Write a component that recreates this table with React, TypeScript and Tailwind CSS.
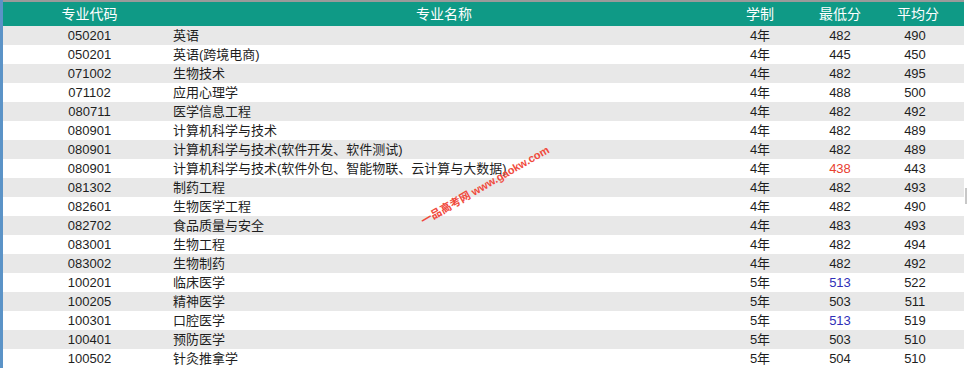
const rows: [string, string, string, string, string, string?][] = [
  ['050201', '英语', '4年', '482', '490'],
  ['050201', '英语(跨境电商)', '4年', '445', '450'],
  ['071002', '生物技术', '4年', '482', '495'],
  ['071102', '应用心理学', '4年', '488', '500'],
  ['080711', '医学信息工程', '4年', '482', '492'],
  ['080901', '计算机科学与技术', '4年', '482', '489'],
  ['080901', '计算机科学与技术(软件开发、软件测试)', '4年', '482', '489'],
  ['080901', '计算机科学与技术(软件外包、智能物联、云计算与大数据)', '4年', '438', '443', 'red'],
  ['081302', '制药工程', '4年', '482', '493'],
  ['082601', '生物医学工程', '4年', '482', '490'],
  ['082702', '食品质量与安全', '4年', '483', '493'],
  ['083001', '生物工程', '4年', '482', '494'],
  ['083002', '生物制药', '4年', '482', '492'],
  ['100201', '临床医学', '5年', '513', '522', 'blue'],
  ['100205', '精神医学', '5年', '503', '511'],
  ['100301', '口腔医学', '5年', '513', '519', 'blue'],
  ['100401', '预防医学', '5年', '503', '510'],
  ['100502', '针灸推拿学', '5年', '504', '510'],
];

const grid = 'grid grid-cols-[167px_548px_84px_76px_86px]';

export default function App() {
  return (
    <div
      className="relative w-[969px] h-[368px] overflow-hidden bg-white text-[13px] text-[#1e1e1e]"
      style={{ fontFamily: '"Liberation Sans", "Noto Sans CJK SC", sans-serif' }}
    >
      <div className="flex h-full">
        <div className="w-[3px] shrink-0 bg-[#5b93c7]" />
        <div className="w-[961px] shrink-0">
          <div className="h-[2px] bg-[#9a9a9a]" />
          <div className={`${grid} h-[24px] items-center bg-[#0f9a86] text-white text-[14px]`}>
            <div className="pl-[6px] text-center">专业代码</div>
            <div className="text-center">专业名称</div>
            <div className="text-center">学制</div>
            <div className="text-center">最低分</div>
            <div className="text-center pr-[6px]">平均分</div>
          </div>
          {rows.map((r, i) => (
            <div
              key={i}
              className={`${grid} h-[19px] items-center leading-[19px] ${i % 2 === 0 ? 'bg-[#e8e8e8]' : 'bg-white'}`}
            >
              <div className="pl-[6px] text-center">{r[0]}</div>
              <div className="pl-[3px] whitespace-nowrap">{r[1]}</div>
              <div className="text-center">{r[2]}</div>
              <div
                className={`text-center ${r[5] === 'red' ? 'text-[#e8402f]' : r[5] === 'blue' ? 'text-[#2f2fb8]' : ''}`}
              >
                {r[3]}
              </div>
              <div className="text-center pr-[12px]">{r[4]}</div>
            </div>
          ))}
        </div>
        <div className="flex-1 relative">
          <div className="absolute left-[1px] top-[188px] w-[2px] h-[16px] bg-[#c8c8c8]" />
        </div>
      </div>
      {/* watermark */}
      <div className="absolute left-[405px] top-[178px] w-[160px] h-[14px] leading-[14px] text-center -rotate-[30deg] text-[11px] font-bold text-[#f04a3c] whitespace-nowrap">
        一品高考网 www.gaokw.com
      </div>
    </div>
  );
}
